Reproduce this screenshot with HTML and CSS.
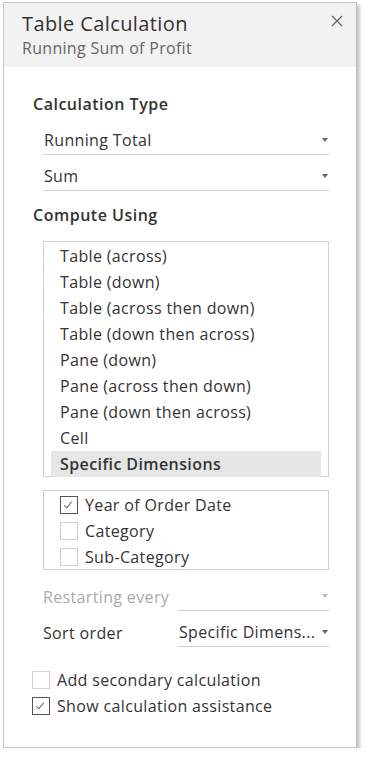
FILE: index.html
```html
<!DOCTYPE html>
<html lang="en">
<head>
    <meta charset="UTF-8">
    <link rel="stylesheet" href="styles.css">
    <title>Table Calculation</title>
</head>
<body>
<div class="dialog">
    <div class="dialog_head">
        <div class="dialog_titles">
            <div class="dialog_title">Table Calculation</div>
            <div class="dialog_sub">Running Sum of Profit</div>
        </div>
        <svg class="close" width="12" height="12" viewBox="0 0 12 12">
            <path d="M1 1L11 11M11 1L1 11" stroke="#666" stroke-width="1.2" fill="none"/>
        </svg>
    </div>

    <div class="dialog_body">
        <div class="section_title">Calculation Type</div>
        <div class="drop">
            <span>Running Total</span><i class="caret"></i>
        </div>
        <div class="drop">
            <span>Sum</span><i class="caret"></i>
        </div>

        <div class="section_title second">Compute Using</div>
        <div class="listbox">
            <div class="list_item">Table (across)</div>
            <div class="list_item">Table (down)</div>
            <div class="list_item">Table (across then down)</div>
            <div class="list_item">Table (down then across)</div>
            <div class="list_item">Pane (down)</div>
            <div class="list_item">Pane (across then down)</div>
            <div class="list_item">Pane (down then across)</div>
            <div class="list_item">Cell</div>
            <div class="list_item selected">Specific Dimensions</div>
        </div>

        <div class="dims">
            <label class="check"><span class="box checked"></span>Year of Order Date</label>
            <label class="check"><span class="box"></span>Category</label>
            <label class="check"><span class="box"></span>Sub-Category</label>
        </div>

        <div class="field disabled">
            <span class="field_label">Restarting every</span>
            <div class="drop small"><span></span><i class="caret"></i></div>
        </div>
        <div class="field">
            <span class="field_label">Sort order</span>
            <div class="drop small"><span>Specific Dimens...</span><i class="caret"></i></div>
        </div>

        <div class="options">
            <label class="check"><span class="box"></span>Add secondary calculation</label>
            <label class="check"><span class="box checked"></span>Show calculation assistance</label>
        </div>
    </div>
</div>
</body>
</html>
```

FILE: styles.css
```css
body, html {
    margin: 0;
    padding: 0;
    background: #fff;
    font-family: "Open Sans", Lato, Arial, sans-serif;
    color: #333;
}

/* Окно диалога */

.dialog {
    margin: 2px 0 0 3px;
    width: 354px;
    height: 746px;
    border: 1px solid #c8c8c8;
    border-right-color: #bbb;
    box-sizing: border-box;
    box-shadow: 3px 3px 3px rgba(0, 0, 0, 0.22);
    background: #fff;
}

.dialog_head {
    background: #f2f2f2;
    height: 64px;
    padding: 7px 13px 0 18px;
    box-sizing: border-box;
    display: flex;
    justify-content: space-between;
}
.dialog_title {
    font-size: 20px;
    letter-spacing: 0.4px;
    line-height: 28px;
    color: #333;
}
.dialog_sub {
    font-size: 16px;
    letter-spacing: 0.3px;
    line-height: 20px;
    color: #666;
}
.close {
    margin-top: 5px;
}

.dialog_body {
    padding: 26px 27px 0 29px;
}

/* Заголовки секций */

.section_title {
    font-weight: 600;
    font-size: 16px;
    letter-spacing: 0.5px;
    line-height: 22px;
    color: #333;
}
.section_title.second {
    margin-top: 13px;
}

/* Выпадающие списки */

.drop {
    margin-left: 10px;
    height: 36px;
    border-bottom: 1px solid #cfcfcf;
    box-sizing: border-box;
    display: flex;
    align-items: flex-end;
    justify-content: space-between;
    padding: 0 0 4px 1px;
    font-size: 16px;
    letter-spacing: 0.35px;
    line-height: 20px;
}
.section_title + .drop {
    margin-top: 4px;
}
.caret {
    width: 0;
    height: 0;
    border-left: 3.5px solid transparent;
    border-right: 3.5px solid transparent;
    border-top: 4px solid #666;
    margin: 0 1px 8px 0;
}

/* Список Compute Using */

.listbox {
    margin: 15px 0 0 10px;
    border: 1px solid #cfcfcf;
    height: 236px;
    box-sizing: border-box;
    padding: 1px 7px 0 7px;
}
.list_item {
    height: 26px;
    line-height: 26px;
    font-size: 16px;
    letter-spacing: 0.35px;
    padding-left: 9px;
}
.list_item.selected {
    font-weight: 600;
    letter-spacing: 0.4px;
    background: #e6e6e6;
}

/* Флажки */

.dims {
    margin: 13px 0 0 10px;
    border: 1px solid #cfcfcf;
    height: 80px;
    box-sizing: border-box;
    padding: 1px 0 0 16px;
}
.check {
    display: flex;
    align-items: center;
    height: 26px;
    font-size: 16px;
    letter-spacing: 0.35px;
}
.box {
    width: 18px;
    height: 18px;
    border: 1px solid #cfcfcf;
    box-sizing: border-box;
    margin-right: 7px;
    position: relative;
    flex-shrink: 0;
}
.box.checked {
    border-color: #555;
}
.box.checked:after {
    content: "";
    position: absolute;
    left: 5px;
    top: 3px;
    width: 3px;
    height: 7px;
    border-right: 1.5px solid #666;
    border-bottom: 1.5px solid #666;
    transform: rotate(40deg);
}

/* Поля Restarting every / Sort order */

.field {
    display: flex;
    align-items: flex-end;
    margin: 5px 0 0 10px;
    font-size: 16px;
    letter-spacing: 0.35px;
}
.field + .field {
    margin-top: 0;
}
.field_label {
    width: 135px;
    line-height: 20px;
    padding-bottom: 4px;
}
.field .drop.small {
    margin: 0;
    flex: 1;
}
.field.disabled {
    color: #aaa;
}
.field.disabled .caret {
    border-top-color: #bbb;
}

.options {
    margin: 20px 0 0 -1px;
}
```
